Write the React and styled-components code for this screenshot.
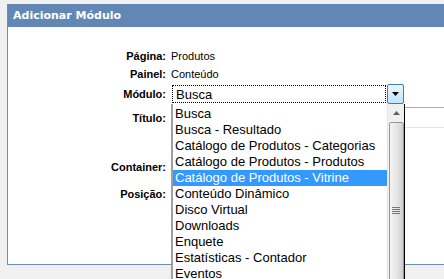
import React from "react";
import styled, { createGlobalStyle } from "styled-components";

const GlobalStyle = createGlobalStyle`
  html, body {
    margin: 0;
    padding: 0;
    overflow: hidden;
    background: #f0f0f0;
    height: 100%;
  }
`;

const Page = styled.div`
  padding: 4px 0 0 7px;
  height: 279px;
  box-sizing: border-box;
`;

const Panel = styled.div`
  background: #fff;
  border-left: 1px solid #6b8cb8;
  border-bottom: 1px solid #6b8cb8;
  height: 261px;
  box-sizing: border-box;
`;

const Header = styled.div`
  height: 23px;
  background: #6287b4;
  color: #fff;
  font-family: "DejaVu Sans", Verdana, sans-serif;
  font-weight: bold;
  font-size: 11px;
  line-height: 23px;
  padding-left: 5px;
`;

const Form = styled.div`
  padding-top: 20px;
  display: flex;
  flex-direction: column;
`;

const Row = styled.div`
  display: grid;
  grid-template-columns: 158px 1fr;
  column-gap: 5px;
  align-items: center;
  height: ${(p) => p.$h}px;
  margin-top: ${(p) => p.$mt || 0}px;
`;

const Label = styled.div`
  text-align: right;
  font-family: "Liberation Sans", Tahoma, Arial, sans-serif;
  font-weight: bold;
  font-size: 11px;
  color: #000;
`;

const Value = styled.div`
  font-family: "Liberation Sans", Tahoma, Arial, sans-serif;
  font-size: 11px;
  color: #000;
`;

const Field = styled.div`
  position: relative;
`;

const Select = styled.div`
  width: 233px;
  height: 20px;
  display: flex;
  box-sizing: border-box;
`;

const SelectText = styled.div`
  flex: 1;
  margin: 1px;
  border: 1px dotted #000;
  font-family: "Liberation Sans", Arial, sans-serif;
  font-size: 13px;
  line-height: 17px;
  padding-left: 3px;
  color: #000;
`;

const Arrow = styled.div`
  width: 17px;
  box-sizing: border-box;
  border: 1px solid #3c7fb1;
  border-radius: 2px;
  background: linear-gradient(#eaf6fd, #bee6fd);
  display: flex;
  align-items: center;
  justify-content: center;
`;

const TextInput = styled.div`
  width: 273px;
  height: 21px;
  box-sizing: border-box;
  border: 1px solid #abadb3;
  border-right: none;
  border-bottom-color: #e3e9ef;
  border-left-color: #e2e3ea;
  margin-top: -1px;
`;

const DropList = styled.div`
  position: absolute;
  top: 20px;
  left: 0;
  width: 234px;
  height: 215px;
  background: #fff;
  border-left: 2px solid #a0a0a0;
  border-right: 1px solid #000;
  box-sizing: border-box;
  display: flex;
  z-index: 5;
`;

const Options = styled.div`
  flex: 1;
  padding-top: 2px;
`;

const Option = styled.div`
  height: 16px;
  line-height: 16px;
  padding-left: 2px;
  font-family: "Liberation Sans", Arial, sans-serif;
  font-size: 13px;
  white-space: nowrap;
  color: ${(p) => (p.$selected ? "#fff" : "#000")};
  background: ${(p) => (p.$selected ? "#3399ff" : "transparent")};
`;

const Scrollbar = styled.div`
  width: 16px;
  background: #f0f0f0;
  border-left: 1px solid #e6e6e6;
  display: flex;
  flex-direction: column;
  align-items: center;
`;

const ScrollButton = styled.div`
  height: 17px;
  width: 100%;
  display: flex;
  align-items: center;
  justify-content: center;
`;

const Thumb = styled.div`
  width: 15px;
  height: 176px;
  margin-top: 1px;
  box-sizing: border-box;
  border: 1px solid #989898;
  border-radius: 2px;
  background: linear-gradient(90deg, #f4f4f4, #e6e6e6 50%, #cfcfcf);
  display: flex;
  align-items: center;
  justify-content: center;
`;

const options = [
  "Busca",
  "Busca - Resultado",
  "Catálogo de Produtos - Categorias",
  "Catálogo de Produtos - Produtos",
  "Catálogo de Produtos - Vitrine",
  "Conteúdo Dinâmico",
  "Disco Virtual",
  "Downloads",
  "Enquete",
  "Estatísticas - Contador",
  "Eventos",
];

const App = () => {
  return (
    <Page>
      <GlobalStyle />
      <Panel>
        <Header>Adicionar Módulo</Header>
        <Form>
          <Row $h={18}>
            <Label>Página:</Label>
            <Value>Produtos</Value>
          </Row>
          <Row $h={18}>
            <Label>Painel:</Label>
            <Value>Conteúdo</Value>
          </Row>
          <Row $h={22}>
            <Label>Módulo:</Label>
            <Field>
              <Select>
                <SelectText>Busca</SelectText>
                <Arrow>
                  <svg width="7" height="4" viewBox="0 0 7 4">
                    <path d="M0 0h7L3.5 4z" fill="#000" />
                  </svg>
                </Arrow>
              </Select>
              <DropList>
                <Options>
                  {options.map((o, i) => (
                    <Option key={o} $selected={i === 4}>
                      {o}
                    </Option>
                  ))}
                </Options>
                <Scrollbar>
                  <ScrollButton>
                    <svg width="7" height="4" viewBox="0 0 7 4">
                      <path d="M3.5 0L7 4H0z" fill="#606060" />
                    </svg>
                  </ScrollButton>
                  <Thumb>
                    <svg width="8" height="7" viewBox="0 0 8 7">
                      <path d="M0 .5h8M0 2.5h8M0 4.5h8M0 6.5h8" stroke="#777" />
                    </svg>
                  </Thumb>
                </Scrollbar>
              </DropList>
            </Field>
          </Row>
          <Row $h={26}>
            <Label>Título:</Label>
            <TextInput />
          </Row>
          <Row $h={36} $mt={18}>
            <Label>Container:</Label>
            <div />
          </Row>
          <Row $h={18}>
            <Label>Posição:</Label>
            <div />
          </Row>
        </Form>
      </Panel>
    </Page>
  );
};

export default App;
